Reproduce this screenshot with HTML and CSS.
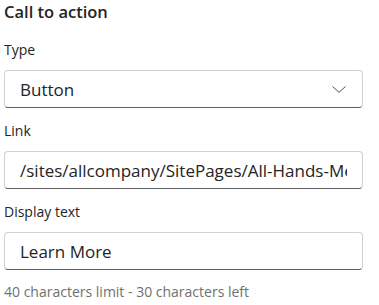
FILE: index.html
```html
<!DOCTYPE html>
<html lang="en">
  <head>
    <meta charset="UTF-8" />
    <title>Call to action</title>
    <link rel="stylesheet" href="styles.css">
  </head>
  <body>
    <div class="panel">
      <h2 class="title">Call to action</h2>

      <div class="field">
        <label class="label">Type</label>
        <div class="box dropdown">
          <span class="value">Button</span>
          <svg class="chevron" width="14" height="7" viewBox="0 0 14 7">
            <path d="M0.5 0.5 L7 6.3 L13.5 0.5" fill="none" stroke="#505050" stroke-width="1" />
          </svg>
        </div>
      </div>

      <div class="field">
        <label class="label">Link</label>
        <div class="box">
          <span class="value clip">/sites/allcompany/SitePages/All-Hands-Meeting.aspx</span>
        </div>
      </div>

      <div class="field">
        <label class="label">Display text</label>
        <div class="box">
          <span class="value">Learn More</span>
        </div>
        <div class="hint">40 characters limit - 30 characters left</div>
      </div>
    </div>
  </body>
</html>
```

FILE: styles.css
```css
* {
  margin: 0;
  padding: 0;
  box-sizing: border-box;
}

body {
  background: #fff;
  font-family: "Open Sans", sans-serif;
  color: #242424;
}

.panel {
  width: 359px;
  margin-left: 4px;
}

.title {
  font-size: 16.5px;
  font-weight: 600;
  line-height: 24px;
  margin-bottom: 16px;
}

.field {
  display: flex;
  flex-direction: column;
}

.label {
  font-size: 14px;
  line-height: 20px;
  margin-bottom: 10px;
}

.box {
  height: 38px;
  border: 1px solid #d1d1d1;
  border-bottom-color: #616161;
  border-radius: 4px;
  display: flex;
  align-items: center;
  padding: 0 15px;
  margin-bottom: 13px;
  overflow: hidden;
}

.value {
  font-size: 17px;
  white-space: nowrap;
}

.clip {
  min-width: 0;
  overflow: hidden;
  text-overflow: clip;
}

.dropdown {
  justify-content: space-between;
  padding-right: 16px;
}

.hint {
  margin-top: -1px;
  font-size: 14px;
  line-height: 20px;
  color: #707070;
}
```
